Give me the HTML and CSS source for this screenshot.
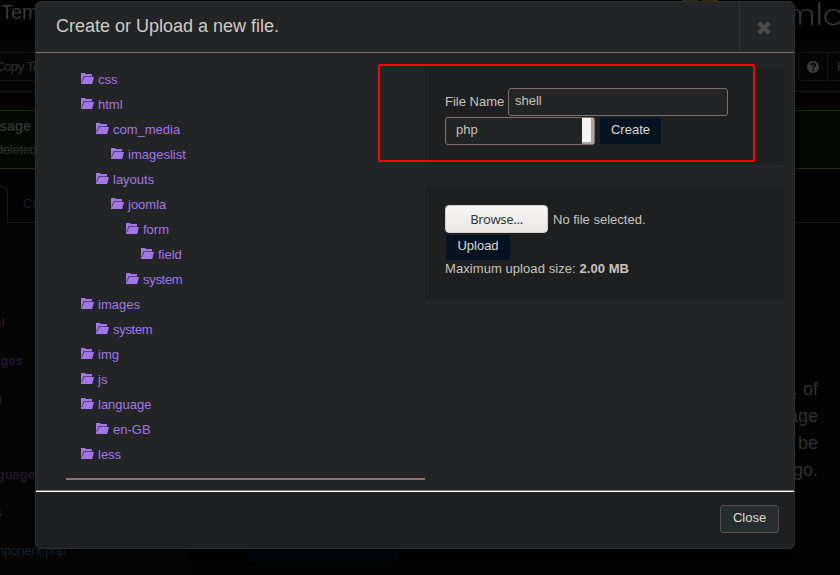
FILE: index.html
```html
<!DOCTYPE html>
<html lang="en">
<head>
<meta charset="utf-8">
<title>Templates</title>
<link rel="stylesheet" href="styles.css">
</head>
<body>
<svg class="defs" width="0" height="0"><defs>
<symbol id="folder" viewBox="0 0 13 11"><path d="M0 0h4.500v1H11v2H2.800L.6 8.500 0 10z" fill="currentColor"/><path d="M1.300 8L3 3.200H11V4.200H3.600L2 8z" fill="#6b509f"/><path d="M3.500 4H13l-1.800 7H0V9.500l1-.5z" fill="currentColor"/></symbol>
</defs></svg>
<div class="page">
  <header class="masthead"><span class="page-title">Tem</span><span class="logo"><i class="petal green"></i><i class="petal orange"></i><span class="wordmark">mlo</span></span></header>
  <div class="toolbar"><div class="tool copy">Copy Te</div><div class="tools-right"><span class="tool help"><svg width="12" height="12" viewBox="0 0 12 12"><circle cx="6" cy="6" r="6" fill="#3b3b3b"/><path d="M4 4.4c.2-2.4 4.1-2.3 4.1 0C8.100 5.800 6.200 5.600 6.200 7.200M6.200 8.300v1.500" fill="none" stroke="#050505" stroke-width="1.600"/></svg></span><span class="tool">H</span></div></div>
  <div class="alert"><b>Message</b><span>deleted</span></div>
  <div class="tabs"><div class="tab active"></div><div class="tab">Cr</div></div>
  <div class="content">
    <div class="files"><b>html</b><b>images</b><b>img</b><b></b><b>language</b><b>less</b><span>component.php</span></div>
    <div class="sample"><p>. of<br>age<br>be<br>go.</p><div class="blue-button"></div></div>
  </div>
</div>
<div class="modal">
  <div class="modal-header"><h3>Create or Upload a new file.</h3><div class="dismiss"><svg width="14" height="14" viewBox="0 0 14 14"><path d="M2 2l10 10M12 2L2 12" stroke="#4b4b4b" stroke-width="4.200"/></svg></div></div>
  <div class="modal-body">
    <div class="tree">
      <div class="row"><svg><use href="#folder"/></svg>css</div>
      <div class="row"><svg><use href="#folder"/></svg>html</div>
      <div class="row l1"><svg><use href="#folder"/></svg>com_media</div>
      <div class="row l2"><svg><use href="#folder"/></svg>imageslist</div>
      <div class="row l1"><svg><use href="#folder"/></svg>layouts</div>
      <div class="row l2"><svg><use href="#folder"/></svg>joomla</div>
      <div class="row l3"><svg><use href="#folder"/></svg>form</div>
      <div class="row l4"><svg><use href="#folder"/></svg>field</div>
      <div class="row l3 tight"><svg><use href="#folder"/></svg>system</div>
      <div class="row"><svg><use href="#folder"/></svg>images</div>
      <div class="row l1 tight"><svg><use href="#folder"/></svg>system</div>
      <div class="row"><svg><use href="#folder"/></svg>img</div>
      <div class="row"><svg><use href="#folder"/></svg>js</div>
      <div class="row"><svg><use href="#folder"/></svg>language</div>
      <div class="row l1"><svg><use href="#folder"/></svg>en-GB</div>
      <div class="row"><svg><use href="#folder"/></svg>less</div>
    </div>
    <div class="forms">
      <div class="well create">
        <div class="line"><span class="label">File Name</span><div class="field">shell</div></div>
        <div class="line second"><div class="select"><span>php</span><i></i></div><div class="primary">Create</div></div>
      </div>
      <div class="well upload">
        <div class="line"><div class="browse">Browse...</div><span class="nofile">No file selected.</span></div>
        <div class="primary">Upload</div>
        <div class="limit">Maximum upload size: <b>2.00 MB</b></div>
      </div>
    </div>
  </div>
  <div class="modal-footer"><div class="close">Close</div></div>
  <div class="highlight"></div>
</div>
</body>
</html>
```
FILE: styles.css
```css
* { box-sizing: border-box; }
body { margin: 0; width: 840px; height: 575px; overflow: hidden; position: relative; background: #030303; font: 13px/18px "Liberation Sans", Arial, sans-serif; color: #c8c3bc; }
.defs { position: absolute; }
.page { height: 575px; overflow: hidden; color: #303030; }
.masthead { height: 40px; background: #000; display: flex; justify-content: space-between; overflow: hidden; }
.page-title { font-size: 20px; line-height: 25px; margin-left: 1px; color: #3a3a3a; }
.logo { display: flex; width: 158px; }
.petal { flex: none; width: 16px; height: 2px; margin-right: 4px; background: #273313; }
.petal.orange { background: #482514; margin-right: 70px; }
.wordmark { font: 300 31px/27px Lato, sans-serif; color: #3a3a3a; transform: scaleX(1.28); transform-origin: left; margin-left: -4px; letter-spacing: -1px; }
.toolbar { height: 52px; padding-top: 12px; border-bottom: 1px solid #1b1b1b; background: #050505; display: flex; justify-content: space-between; }
.tool { height: 29px; line-height: 27px; border: 1px solid #1c1110; padding: 0 10px; }
.copy { margin-left: -16px; width: 120px; white-space: nowrap; border-top-color: #171717; letter-spacing: -.4px; }
.tools-right { display: flex; width: 42px; overflow: hidden; }
.help { flex: none; width: 30px; padding: 0 8px; border-radius: 4px 0 0 4px; display: flex; align-items: center; }
.help + .tool { border-left: 0; padding-left: 9px; }
.alert { height: 59px; margin-top: 18px; border: solid #1c300c; border-width: 1px 0; background: #040800; display: flex; flex-direction: column; color: #30332c; }
.alert b { font-size: 14px; margin: 6px 0 6px -28px; }
.alert span { margin-left: -4px; letter-spacing: -.3px; }
.tabs { height: 54px; padding-top: 18px; display: flex; }
.tab { width: 160px; height: 36px; border-bottom: 1px solid #1b1b1b; padding: 8px 15px; color: #0f202e; flex: auto; }
.tab.active { flex: none; width: 8px; padding: 0; border: solid #1b1b1b; border-width: 1px 1px 0 0; border-radius: 0 4px 0 0; }
.content { display: flex; justify-content: space-between; padding-top: 80px; background: linear-gradient(90deg, #050505 188px, #030303 188px); height: 352px; }
.files { width: 90px; display: flex; flex-direction: column; color: #21162f; }
.files b { height: 38px; line-height: 38px; width: 0; margin-left: 35px; display: flex; justify-content: flex-end; border-top: 1px solid #070707; }
.files b:nth-child(1) { margin-left: 5px; }
.files b:nth-child(2) { margin-left: 23px; }
.files b:nth-child(3), .files b:nth-child(6) { margin-left: 2px; }
.files span { margin-left: -20px; line-height: 39px; color: #14222b; letter-spacing: -.3px; }
.sample { width: 570px; font-size: 18px; line-height: 27px; text-align: right; padding: 73px 22px 0 0; }
.sample p { margin: 0; }
.blue-button { width: 150px; height: 21px; margin: 56px 0 0 -22px; background: #01070c; border-radius: 4px; }
.modal { position: absolute; left: 35px; top: 1px; width: 760px; height: 548px; border: 1px solid #302e2d; border-radius: 6px; background: #232425; box-shadow: 0 3px 7px rgba(0,0,0,.3); display: flex; flex-direction: column; }
.modal-header { height: 51px; border-bottom: 1px solid #836f69; display: flex; justify-content: space-between; }
h3 { margin: 0 0 0 20px; font-size: 18px; font-weight: 400; line-height: 48px; color: #d0cbc5; }
.dismiss { width: 55px; border-left: 1px solid #303132; display: flex; align-items: center; justify-content: center; padding-right: 6px; padding-top: 1px; }
.modal-body { height: 437px; display: flex; padding: 15px 10px 10px 30px; }
.tree { width: 359px; height: 412px; padding-left: 15px; border-bottom: 2px solid #8b756f; }
.row { height: 25px; line-height: 23px; display: flex; color: #a276e5; }
.row svg { width: 13px; height: 11px; margin: 5px 4px 0 0; }
.tight { letter-spacing: -.3px; }
.l1 { margin-left: 15px; }
.l2 { margin-left: 30px; }
.l3 { margin-left: 45px; }
.l4 { margin-left: 60px; }
.forms { width: 359px; }
.well { background: #1e1f20; border-radius: 3px; padding: 20px; margin-bottom: 20px; }
.create { height: 97px; }
.upload { height: 114px; }
.line { display: flex; height: 28px; }
.label { line-height: 27px; width: 63px; }
.field { width: 220px; height: 28px; padding: 0 6px; line-height: 24px; border: 1px solid #836f69; border-radius: 3px; background: #232425; }
.second { margin-top: 1px; }
.select { width: 150px; height: 28px; border: 1px solid #836f69; border-radius: 3px; background: #232425; display: flex; justify-content: space-between; line-height: 24px; padding-left: 10px; margin-right: 4px; overflow: hidden; }
.select i { width: 12px; background: #f5f4f2; border: solid #aaa5a1; border-width: 0 3px 2px 0; }
.primary { width: 63px; height: 28px; border: 1px solid #16232d; border-radius: 3px; background: #051321; color: #dedbd7; text-align: center; line-height: 24px; }
.browse { width: 103px; height: 28px; border: 1px solid #d6d1cb; border-radius: 4px; background: linear-gradient(#f7f6f5, #e9e7e5); color: #333a3c; font: 13px/27px "Noto Sans", sans-serif; letter-spacing: -.3px; text-align: center; }
.nofile { margin-left: 5px; line-height: 29px; }
.upload .primary { width: 66px; height: 27px; margin-top: 1px; line-height: 22px; }
.limit { line-height: 18px; margin-top: -1px; letter-spacing: .07px; }
.modal-footer { height: 58px; border-top: 1px solid #836f69; box-shadow: inset 0 1px #fff; background: #1d1f20; border-radius: 0 0 6px 6px; padding: 15px 15px 0; display: flex; justify-content: flex-end; }
.close { width: 59px; height: 28px; margin-top: -1px; border: 1px solid #594b47; border-radius: 3px; background: #262d2f; color: #dedbd7; line-height: 24px; text-align: center; }
.highlight { position: absolute; left: 342px; top: 62px; width: 377px; height: 98px; border: 2px solid #f00; border-radius: 2px; }
```
